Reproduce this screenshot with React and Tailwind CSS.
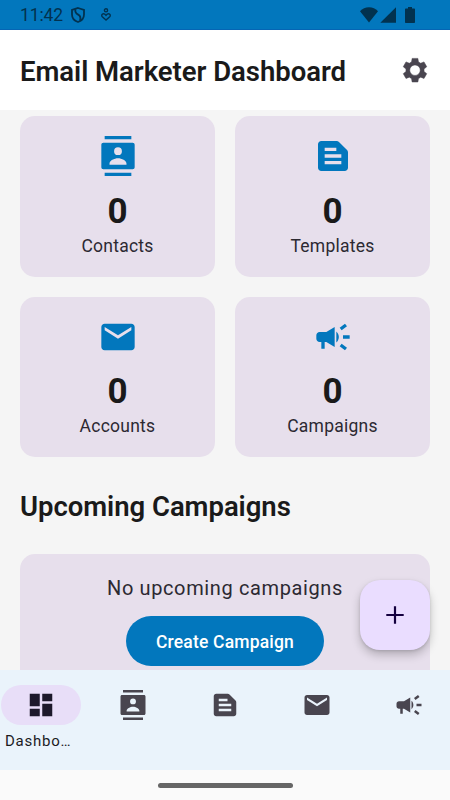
import React from 'react';
import { MdCampaign, MdDashboard, MdEmail, MdTextSnippet } from 'react-icons/md';

const ContactsIcon = ({ className }) => (
  <svg viewBox="0 0 24 24" fill="currentColor" className={className}>
    <path d="M4 0h16v2H4zM4 22h16v2H4z" />
    <path
      fillRule="evenodd"
      d="M3.2 4h17.6c.7 0 1.2.5 1.2 1.2v13.6c0 .7-.5 1.2-1.2 1.2H3.2c-.7 0-1.2-.5-1.2-1.2V5.2C2 4.500 2.500 4 3.200 4zM12 6.750a2.350 2.350 0 1 0 0 4.700 2.350 2.350 0 0 0 0-4.700zM6.900 17.250h10.200v-.6c0-1.900-2.900-3.250-5.100-3.250s-5.100 1.350-5.100 3.250z"
    />
  </svg>
);

// Six teeth around a ring
const GearIcon = ({ className }) => (
  <svg viewBox="0 0 24 24" fill="currentColor" stroke="currentColor" strokeWidth="0.4" strokeLinejoin="round" className={className}>
    <path
      fillRule="evenodd"
      d="M9.700 2.700h4.600l.5 2.900c.6.200 1.200.6 1.700 1l2.700-1.100 2.200 3.900-2.200 1.800a7.500 7.500 0 0 1 0 1.900l2.200 1.800-2.200 3.900-2.700-1.100c-.5.4-1.100.8-1.700 1l-.5 2.900H9.700l-.5-2.900c-.6-.2-1.200-.6-1.700-1l-2.700 1.100-2.200-3.900 2.200-1.800a7.500 7.500 0 0 1 0-1.900L2.600 9.400l2.200-3.900 2.700 1.100c.5-.4 1.100-.8 1.700-1zM12 7.950a4.200 4.200 0 1 0 0 8.400 4.200 4.200 0 0 0 0-8.400z"
    />
  </svg>
);

const cards = [
  { label: 'Contacts', count: 0, icon: ContactsIcon },
  { label: 'Templates', count: 0, icon: MdTextSnippet },
  { label: 'Accounts', count: 0, icon: MdEmail },
  { label: 'Campaigns', count: 0, icon: MdCampaign },
];

const tabs = [
  { id: 'contacts', icon: ContactsIcon },
  { id: 'templates', icon: MdTextSnippet },
  { id: 'accounts', icon: MdEmail },
  { id: 'campaigns', icon: MdCampaign },
];

const StatusBar = () => (
  <div className="flex h-[30px] shrink-0 items-center justify-between border-b border-[#0565b4] bg-[#0277bd] pl-5 pr-[35px] text-[#02324f]">
    <div className="flex items-center">
      <span className="w-[44px] pt-[2px] text-[17.5px] leading-none tracking-[-0.1px]">11:42</span>
      <svg viewBox="0 0 14 16" className="ml-[7px] h-4 w-3.5" fill="none" stroke="currentColor" strokeWidth="1.8">
        <path d="M7 1 13 3v4.500c0 3.500-2.400 6.300-6 7.500C3.400 13.800 1 11 1 7.500V3z" />
        <path d="M4.500 2.200c-.8 2.600.2 4 2.700 5.400 2.300 1.300 2.800 3 1.800 6" />
      </svg>
      <svg viewBox="0 0 10 13" className="ml-4 h-[13px] w-2.5" fill="none" stroke="currentColor" strokeWidth="1.4">
        <circle cx="5" cy="2.300" r="1.600" />
        <path d="M5 12 1.300 8.700C.3 7.600.8 5.700 2.400 5.700c1.100 0 1.900.6 2.600 1.600.7-1 1.500-1.600 2.600-1.600 1.600 0 2.100 1.900 1.100 3z" />
      </svg>
    </div>
    <div className="flex items-center">
      <svg viewBox="0 0 18 16" className="h-4 w-[18px]" fill="currentColor">
        <path d="M0 4.300C2.400 1.600 5.500.3 9 .3s6.600 1.300 9 4L9 15.600z" />
      </svg>
      <svg viewBox="0 0 16 16" className="ml-[2px] h-4 w-4" fill="currentColor">
        <path d="M16 .3v15.400H.3z" />
      </svg>
      <svg viewBox="0 0 10 16" className="ml-[9px] h-4 w-2.5" fill="currentColor">
        <path d="M3 0h4v1.500h2c.6 0 1 .4 1 1V15c0 .6-.4 1-1 1H1c-.6 0-1-.4-1-1V2.500c0-.6.4-1 1-1h2z" />
      </svg>
    </div>
  </div>
);

const StatCard = ({ label, count, icon: Icon }) => (
  <div className="flex h-[160.3px] flex-col items-center rounded-[15px] bg-[#e7dfec] pt-5">
    <Icon className="h-10 w-10 text-[#0277bd]" />
    <span className="mt-[12.6px] text-[35px] font-bold leading-[45px] text-[#1a1a1a]">{count}</span>
    <span className="text-[17.5px] leading-[25px] tracking-[0.25px] text-[#2c2932]">{label}</span>
  </div>
);

const BottomNav = () => (
  <nav className="flex h-[100px] shrink-0 gap-[10px] bg-[#eaf3fb] pt-[15px]">
    <button className="flex w-[82px] flex-col items-center">
      <span className="flex h-10 w-20 items-center justify-center rounded-full bg-[#e8def8]">
        <MdDashboard className="h-[30px] w-[30px] text-[#1d192b]" />
      </span>
      <span className="mt-[6px] w-full pl-[5px] text-left text-[15px] leading-5 tracking-[0.75px] text-[#1c1b1f]">
        Dashbo…
      </span>
    </button>
    {tabs.map(({ id, icon: Icon }) => (
      <button key={id} aria-label={id} className="mr-px flex h-10 w-[81px] items-center justify-center text-[#49454f]">
        <Icon className="h-[30px] w-[30px]" />
      </button>
    ))}
  </nav>
);

const App = () => {
  return (
    <div className="relative flex h-[800px] w-[450px] flex-col overflow-hidden bg-[#f5f5f5] font-['Roboto',sans-serif]">
      <StatusBar />

      {/* Header */}
      <header className="flex h-20 shrink-0 items-center justify-between bg-white px-5">
        <h1 className="pt-[2px] text-[27.5px] font-semibold leading-[35px] tracking-[-0.04px] text-[#1a1a1a]">
          Email Marketer Dashboard
        </h1>
        <GearIcon className="h-[30px] w-[30px] text-[#49454f]" />
      </header>

      <main className="min-h-0 flex-1 overflow-hidden px-5 pt-[6.4px]">
        <div className="grid grid-cols-2 gap-5">
          {cards.map((card) => (
            <StatCard key={card.label} {...card} />
          ))}
        </div>

        <h2 className="mt-[32px] text-[27.5px] font-semibold leading-[35px] tracking-[-0.04px] text-[#1a1a1a]">
          Upcoming Campaigns
        </h2>

        <div className="mt-[30px] flex h-[132px] flex-col items-center rounded-[15px] bg-[#e7dfec] pt-[19px]">
          <p className="text-[20px] leading-[30px] tracking-[0.625px] text-[#2c2932]">No upcoming campaigns</p>
          <button className="mt-[13px] h-[50px] w-[198px] rounded-full bg-[#0277bd] pt-[2px] text-[17.5px] font-medium tracking-[0.18px] text-white">
            Create Campaign
          </button>
        </div>
      </main>

      <button
        aria-label="Add"
        className="absolute left-[360px] top-[580px] flex h-[70px] w-[70px] items-center justify-center rounded-[20px] bg-[#eaddff] text-[#14003f] shadow-[0_5px_10px_rgba(0,0,0,0.22),0_1px_3px_rgba(0,0,0,0.12)]"
      >
        <svg viewBox="0 0 30 30" className="h-[30px] w-[30px]" stroke="currentColor" strokeWidth="2.2">
          <path d="M15 6.300v17.400M6.300 15h17.400" />
        </svg>
      </button>

      <div className="relative shrink-0">
        <BottomNav />
        <div className="flex h-[30px] items-center justify-center bg-[#fafafa]">
          <div className="h-[5px] w-[135px] rounded-full bg-[#666666]" />
        </div>
      </div>
    </div>
  );
};

export default App;
